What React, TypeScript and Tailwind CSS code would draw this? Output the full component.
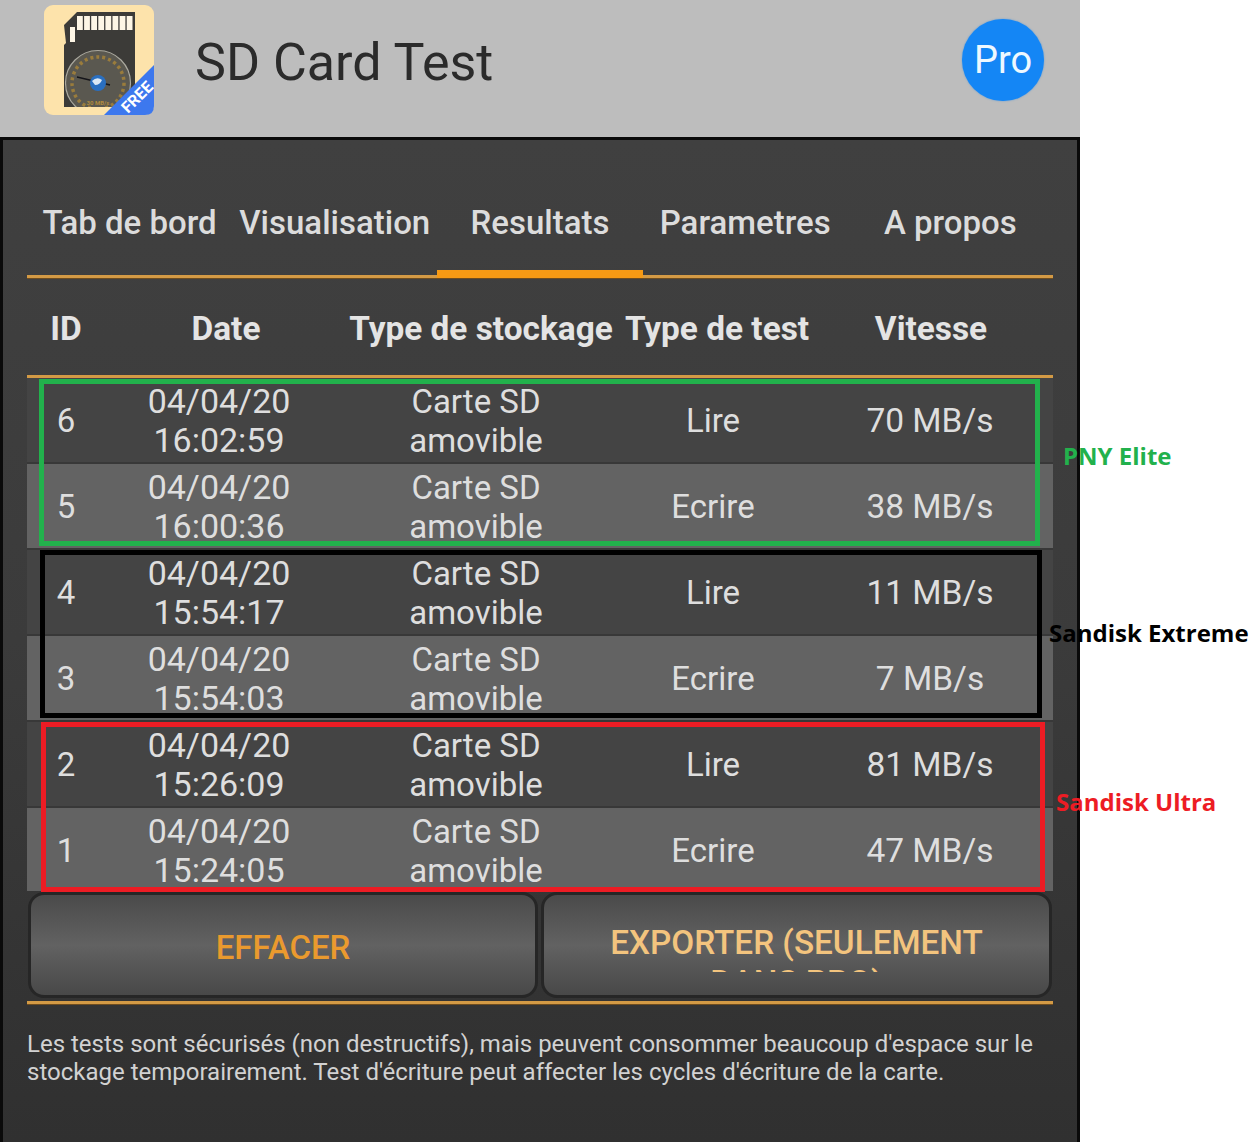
const rows = [
  { id: '6', date: '04/04/20', time: '16:02:59', test: 'Lire', speed: '70 MB/s' },
  { id: '5', date: '04/04/20', time: '16:00:36', test: 'Ecrire', speed: '38 MB/s' },
  { id: '4', date: '04/04/20', time: '15:54:17', test: 'Lire', speed: '11 MB/s' },
  { id: '3', date: '04/04/20', time: '15:54:03', test: 'Ecrire', speed: '7 MB/s' },
  { id: '2', date: '04/04/20', time: '15:26:09', test: 'Lire', speed: '81 MB/s' },
  { id: '1', date: '04/04/20', time: '15:24:05', test: 'Ecrire', speed: '47 MB/s' },
];

const tabs = ['Tab de bord', 'Visualisation', 'Resultats', 'Parametres', 'A propos'];

function AppIcon() {
  return (
    <svg viewBox="0 0 110 110" className="h-[110px] w-[110px] shrink-0">
      <defs>
        <clipPath id="card">
          <path d="M20 20 L33 7 H91 V102 H20 V40 L22 38 Z" />
        </clipPath>
      </defs>
      <rect width="110" height="110" rx="9" fill="#fde3ab" />
      <path d="M20 20 L33 7 H91 V102 H20 V40 L22 38 Z" fill="#3c3b38" />
      {[0, 1, 2, 3, 4, 5, 6, 7].map((i) => (
        <rect key={i} x={33 + i * 7.1} y="11" width="5.8" height="14" fill="#fdf6e6" />
      ))}
      <rect x="26" y="22" width="5" height="15" fill="#fdf6e6" />
      <g clipPath="url(#card)">
        <circle cx="54" cy="78" r="32.5" fill="#5a5850" stroke="#aaa89e" strokeWidth="1.2" />
        <circle cx="54" cy="78" r="26" fill="none" stroke="#9a7c3c" strokeWidth="3.5" strokeDasharray="3 3" />
        <text x="54" y="100" textAnchor="middle" fontSize="6" fontWeight="700" fill="#b08a3c" fontFamily="Roboto, sans-serif">
          30 MB/s
        </text>
      </g>
      <path d="M33 72 L54 77 L66 80" stroke="#15151a" strokeWidth="1.3" fill="none" />
      <circle cx="54" cy="78" r="8" fill="#2a6fc0" />
      <path d="M48 76 Q53 71 58 75 Q56 80 51 80 Z" fill="#dbe8f5" />
      <path d="M110 60 V101 Q110 110 101 110 H60 Z" fill="#3d78ee" />
      <text
        transform="translate(97 96) rotate(-45)"
        textAnchor="middle"
        fontSize="16"
        fontWeight="700"
        fill="#fff"
        fontFamily="Roboto, sans-serif"
      >
        FREE
      </text>
    </svg>
  );
}

export default function App() {
  return (
    <div className="relative h-[1142px] w-[1252px] overflow-hidden bg-white font-['Roboto',sans-serif]">
      <div className="w-[1080px]">
        <header className="flex h-[137px] items-start bg-[#bdbdbd] pl-[44px] pr-[36px] pt-[5px]">
          <AppIcon />
          <h1 className="ml-[41px] mt-[32px] flex-1 text-[52px] leading-none text-[#2b2b2b]">SD Card Test</h1>
          <div className="mt-[14px] flex h-[82px] w-[82px] items-center justify-center rounded-full bg-[#1486f5] text-[38px] text-[#eef8ff] shadow-[0_0_2px_#5a9ad8]">
            Pro
          </div>
        </header>

        <main className="flex h-[1005px] flex-col border-x-[3px] border-t-[3px] border-[#0a0a0a] bg-linear-to-b from-[#404040] via-[#3b3b3b] to-[#303030]">
          <div className="px-[24px]">
            <nav className="grid h-[138px] grid-cols-5 border-b-[3px] border-[#d39a45] pt-[60px] text-center text-[33px] font-medium leading-[46px] text-[#dcdcdc] shadow-[0_1px_0_#6e4c1f]">
              {tabs.map((t) => (
                <div key={t} className={t === 'Resultats' ? 'relative whitespace-nowrap' : 'whitespace-nowrap'}>
                  {t}
                  {t === 'Resultats' && <div className="absolute inset-x-0 top-[70px] h-[8px] bg-[#f79a14]" />}
                </div>
              ))}
            </nav>

            <div className="grid h-[100px] grid-cols-[78px_242px_268px_204px_224px] items-center border-b-[3px] border-[#d39a45] pt-[5px] text-center text-[33.4px] font-bold text-[#e4e4e4]">
              <div>ID</div>
              <div>Date</div>
              <div className="whitespace-nowrap">Type de stockage</div>
              <div>Type de test</div>
              <div>Vitesse</div>
            </div>

            <div className="h-[513px] overflow-hidden text-center text-[33px] leading-[39px] text-[#dedede]">
              {rows.map((r, i) => (
                <div
                  key={r.id}
                  className={`grid h-[86px] grid-cols-[78px_228px_286px_188px_246px] items-center border-b-[2px] border-[#383838] pt-[1px] ${
                    i % 2 === 0 ? 'bg-[#444444]' : 'bg-[#636363]'
                  }`}
                >
                  <div>{r.id}</div>
                  <div className="text-[34px]">
                    {r.date}
                    <br />
                    {r.time}
                  </div>
                  <div>
                    Carte SD
                    <br />
                    amovible
                  </div>
                  <div>{r.test}</div>
                  <div className="text-[33.5px]">{r.speed}</div>
                </div>
              ))}
            </div>
          </div>

          <div className="flex-1 px-[24px]">
            <div className="grid grid-cols-[510px_1fr] gap-[3px] border-b-[3px] border-[#d39a45] pb-[3px] pl-[1px] pr-[1px] pt-[1px] shadow-[0_1px_0_#6e4c1f]">
              <button className="flex h-[106px] items-center justify-center rounded-[16px] border-[3px] border-[#262626] bg-linear-to-b from-[#4a4a4a] via-[#626262] to-[#484848] pt-[5px] text-[33px] font-medium text-[#ea9a2e]">
                EFFACER
              </button>
              <button className="flex h-[106px] items-start justify-center rounded-[16px] border-[3px] border-[#262626] bg-linear-to-b from-[#4a4a4a] via-[#626262] to-[#484848] pt-[28px] text-[33.3px] font-medium leading-[40px] text-[#f3c47e]">
                <span className="block h-[49px] w-[440px] overflow-hidden">EXPORTER (SEULEMENT DANS PRO)</span>
              </button>
            </div>

            <p className="pt-[26px] text-[24px] leading-[28px] text-[#d2d2d2]">
              Les tests sont sécurisés (non destructifs), mais peuvent consommer beaucoup d'espace sur le stockage
              temporairement. Test d'écriture peut affecter les cycles d'écriture de la carte.
            </p>
          </div>
        </main>
      </div>

      {/* annotations drawn on top of the screenshot */}
      <div className="absolute left-[39px] top-[379px] h-[167px] w-[1001px] border-[5px] border-[#22b14c]" />
      <div className="absolute left-[40px] top-[550px] h-[168px] w-[1002px] border-[5px] border-black" />
      <div className="absolute left-[41px] top-[722px] h-[170px] w-[1004px] border-[5px] border-[#ed1c24]" />
      <div className="absolute left-[1063px] top-[439px] font-['Open_Sans',sans-serif] text-[24px] font-bold leading-[34px] text-[#22b14c]">PNY Elite</div>
      <div className="absolute left-[1049px] top-[616px] whitespace-nowrap font-['Open_Sans',sans-serif] text-[24px] font-bold leading-[34px] text-black">Sandisk Extreme</div>
      <div className="absolute left-[1056px] top-[785px] whitespace-nowrap font-['Open_Sans',sans-serif] text-[24px] font-bold leading-[34px] text-[#ed1c24]">Sandisk Ultra</div>
    </div>
  );
}
